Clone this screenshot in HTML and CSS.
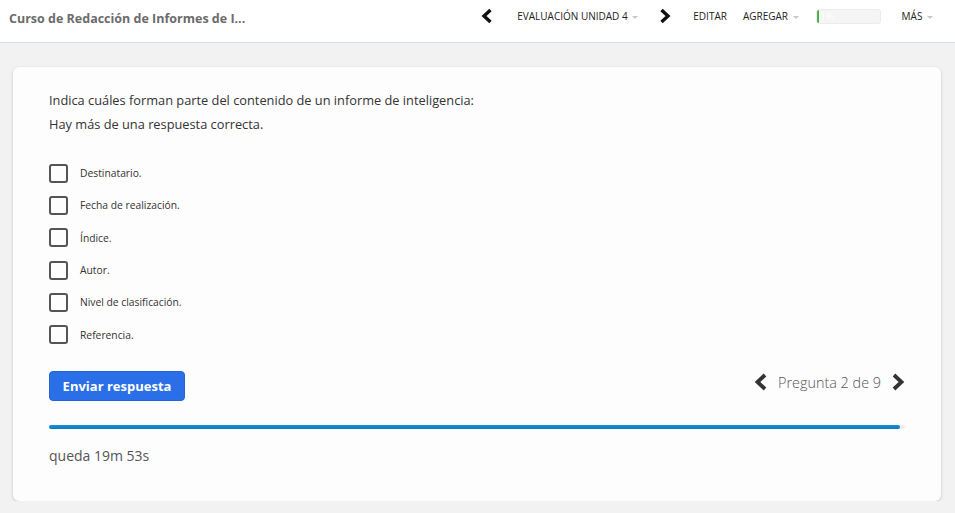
FILE: index.html
```html
<!DOCTYPE html>
<html lang="es">
<head>
    <meta charset="UTF-8">
    <meta name="viewport" content="width=device-width, initial-scale=1.0">
    <title>Evaluación Unidad 4</title>
    <link rel="stylesheet" href="styles.css">
</head>
<body>

    <header class="topbar">
        <div class="course-title">Curso de Redacción de Informes de I...</div>
        <nav class="topbar-nav">
            <a class="nav-arrow nav-arrow-prev" href="#">
                <svg width="12" height="16" viewBox="0 0 12 16"><polyline points="9.5,2 3,8 9.5,14" fill="none" stroke="#111" stroke-width="3.4" stroke-linejoin="miter"/></svg>
            </a>
            <span class="nav-item nav-unit">EVALUACIÓN UNIDAD 4 <span class="caret"></span></span>
            <a class="nav-arrow nav-arrow-next" href="#">
                <svg width="12" height="16" viewBox="0 0 12 16"><polyline points="2.5,2 9,8 2.5,14" fill="none" stroke="#111" stroke-width="3.4" stroke-linejoin="miter"/></svg>
            </a>
            <span class="nav-item nav-edit">EDITAR</span>
            <span class="nav-item nav-add">AGREGAR <span class="caret"></span></span>
            <div class="course-progress"><div class="course-progress-fill"></div><span class="course-progress-label">1%</span></div>
            <span class="nav-item nav-more">MÁS <span class="caret"></span></span>
        </nav>
    </header>

    <main class="quiz-card">
        <p class="question">Indica cuáles forman parte del contenido de un informe de inteligencia:<br>Hay más de una respuesta correcta.</p>

        <ul class="options">
            <li><label><input type="checkbox"><span class="box"></span>Destinatario.</label></li>
            <li><label><input type="checkbox"><span class="box"></span>Fecha de realización.</label></li>
            <li><label><input type="checkbox"><span class="box"></span>Índice.</label></li>
            <li><label><input type="checkbox"><span class="box"></span>Autor.</label></li>
            <li><label><input type="checkbox"><span class="box"></span>Nivel de clasificación.</label></li>
            <li><label><input type="checkbox"><span class="box"></span>Referencia.</label></li>
        </ul>

        <div class="quiz-actions">
            <button class="submit-btn">Enviar respuesta</button>
            <div class="pager">
                <svg width="14" height="18" viewBox="0 0 14 18"><polyline points="11,2 3.5,9 11,16" fill="none" stroke="#333" stroke-width="3.8"/></svg>
                <span class="pager-label">Pregunta 2 de 9</span>
                <svg width="14" height="18" viewBox="0 0 14 18"><polyline points="3,2 10.5,9 3,16" fill="none" stroke="#333" stroke-width="3.8"/></svg>
            </div>
        </div>

        <div class="timer-bar"><div class="timer-fill" style="width: 99.4%"></div></div>
        <p class="timer-text">queda 19m 53s</p>
    </main>

</body>
</html>
```

FILE: styles.css
```css
body {
    font-family: "Open Sans", Arial, sans-serif;
    margin: 0;
    padding: 0;
    background-color: #f2f2f2;
    color: #333;
}

/* barra superior */
.topbar {
    height: 42px;
    background-color: #ffffff;
    border-bottom: 1px solid #d3dde2;
    display: flex;
    align-items: center;
    justify-content: space-between;
    padding: 0 0 0 9px;
    margin-bottom: 24px;
}
.course-title {
    font-size: 12.5px;
    font-weight: 700;
    color: #6b6b6b;
    margin-top: -5px;
}
.topbar-nav {
    display: flex;
    align-items: center;
    margin-top: -10px;
    padding-right: 22px;
}
.nav-item {
    font-size: 10px;
    color: #222;
    white-space: nowrap;
}
.caret {
    display: inline-block;
    width: 0;
    height: 0;
    border-left: 3px solid transparent;
    border-right: 3px solid transparent;
    border-top: 3px solid #c8c8c8;
    vertical-align: middle;
    margin-left: 2px;
}
.nav-arrow {
    display: flex;
}
.nav-arrow-prev {
    margin-right: 24px;
}
.nav-unit {
    margin-right: 21px;
}
.nav-arrow-next {
    margin-right: 22px;
}
.nav-edit {
    margin-right: 16px;
}
.nav-add {
    margin-right: 17px;
}
.course-progress {
    position: relative;
    width: 63px;
    height: 13px;
    background-color: #f5f5f5;
    border: 1px solid #ececec;
    border-radius: 3px;
    overflow: hidden;
    margin-right: 21px;
}
.course-progress-fill {
    width: 2px;
    height: 100%;
    background-color: #4caf50;
}
.course-progress-label {
    position: absolute;
    left: 4px;
    top: -1px;
    font-size: 9px;
    color: #ffffff;
}

/* tarjeta de la pregunta */
.quiz-card {
    margin: 0 14px 0 13px;
    background-color: #fdfdfd;
    border-radius: 6px;
    box-shadow: 0 1px 3px rgba(0, 0, 0, 0.2);
    padding: 21px 36px 36px;
}
.question {
    margin: 0;
    font-size: 12.8px;
    line-height: 24px;
    color: #333;
}
.options {
    list-style: none;
    margin: 21px 0 0;
    padding: 0;
}
.options li {
    height: 32.3px;
    display: flex;
    align-items: center;
}
.options label {
    display: flex;
    align-items: center;
    font-size: 10.3px;
    color: #333;
    cursor: pointer;
}
.options input {
    display: none;
}
.box {
    width: 15px;
    height: 15px;
    border: 2px solid #555;
    border-radius: 3px;
    margin-right: 12px;
}
.options input:checked + .box {
    background-color: #2b6fe6;
    border-color: #2b6fe6;
}

.quiz-actions {
    display: flex;
    justify-content: space-between;
    align-items: flex-start;
    margin-top: 20px;
}
.submit-btn {
    font-family: "Open Sans", Arial, sans-serif;
    font-size: 13px;
    font-weight: 700;
    color: #ffffff;
    background-color: #2a6fe7;
    border: 1px solid #2363d4;
    border-radius: 4px;
    width: 136px;
    height: 30px;
    padding: 0;
    cursor: pointer;
}
.pager {
    display: flex;
    align-items: center;
    gap: 10px;
    margin-top: 2px;
}
.pager-label {
    font-size: 14.4px;
    font-weight: 300;
    color: #555;
}

.timer-bar {
    margin-top: 24px;
    height: 4px;
    background-color: #eeeeee;
    border-radius: 2px;
}
.timer-fill {
    height: 100%;
    background: linear-gradient(to bottom, #1592d6, #0a7cc1);
    border-radius: 2px;
}
.timer-text {
    margin: 17px 0 0;
    font-size: 14px;
    color: #555;
}
```
